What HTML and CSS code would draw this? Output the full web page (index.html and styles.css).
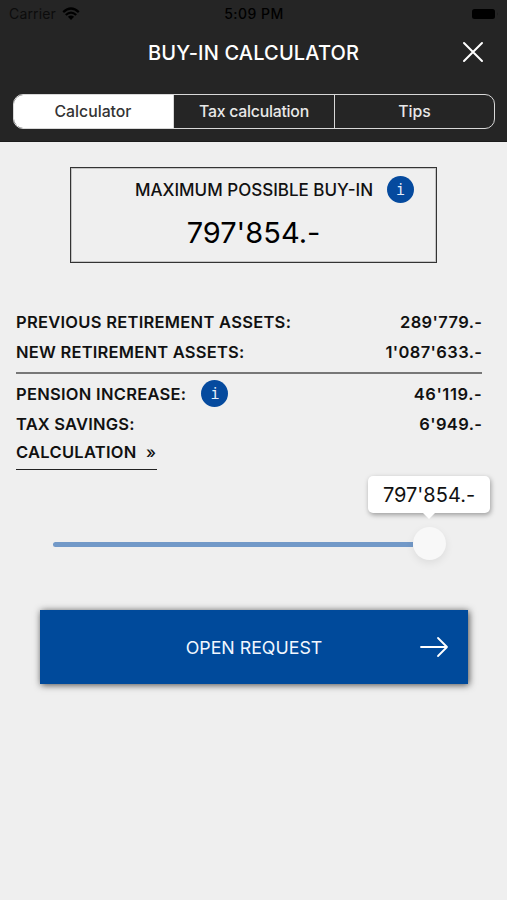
FILE: index.html
```html
<!DOCTYPE html>
<html lang="en">
<head>
<meta charset="utf-8">
<title>Buy-in calculator</title>
<link rel="stylesheet" href="styles.css">
</head>
<body>
<header class="header">
  <div class="status">
    <div class="carrier"><span>Carrier</span>
      <svg class="wifi" viewBox="0 0 18 13"><path d="M1.2 5.1Q9-2 16.8 5.1M3.8 8Q9 3.3 14.2 8" fill="none" stroke="#000" stroke-width="2.3"/><path d="M5.9 9.8Q9 7.4 12.1 9.8L9 13Z"/></svg>
    </div>
    <span class="clock">5:09 PM</span>
    <svg class="battery" viewBox="0 0 27 12"><rect x="0" y="1" width="23" height="10" rx="2.5"/><path d="M25 4.5q1.6 1.5 0 3z" fill="#1a1a1a"/></svg>
  </div>
  <div class="titlebar">
    <h1 class="title">BUY-IN CALCULATOR</h1>
    <svg class="close" viewBox="0 0 22 22"><path d="M2 2 20 20M20 2 2 20" fill="none" stroke="#fff" stroke-width="2" stroke-linecap="round"/></svg>
  </div>
  <nav class="tabs">
    <span class="tab tab-active">Calculator</span>
    <span class="tab tab-tax">Tax calculation</span>
    <span class="tab">Tips</span>
  </nav>
</header>
<main class="content">
  <section class="summary">
    <div class="summary-head"><span class="summary-label">MAXIMUM POSSIBLE BUY-IN</span><span class="info">i</span></div>
    <div class="amount">797'854.-</div>
  </section>
  <section class="figures">
    <div class="row"><span>PREVIOUS RETIREMENT ASSETS:</span><span class="value">289'779.-</span></div>
    <div class="row"><span class="label-new">NEW RETIREMENT ASSETS:</span><span class="value">1'087'633.-</span></div>
    <div class="row row-pension"><span class="pension"><span>PENSION INCREASE:</span><span class="info">i</span></span><span class="value value-pension">46'119.-</span></div>
    <div class="row row-tax"><span class="label-tax">TAX SAVINGS:</span><span class="value">6'949.-</span></div>
    <a class="calc"><span>CALCULATION</span><span class="chevron">»</span></a>
  </section>
  <section class="slider">
    <div class="track"></div>
    <div class="thumb"><div class="bubble">797'854.-</div></div>
  </section>
  <div class="button"><span class="button-label">OPEN REQUEST</span>
    <svg class="arrow" viewBox="0 0 30 22"><path d="M2 11H28M19 2 28 11 19 20" fill="none" stroke="#fff" stroke-width="1.8" stroke-linecap="round" stroke-linejoin="round"/></svg>
  </div>
</main>
</body>
</html>
```
FILE: styles.css
```css
* { box-sizing: border-box; }
body {
  margin: 0;
  width: 507px;
  height: 900px;
  overflow: hidden;
  background: #efefef;
  color: #111;
  font-family: Inter, "Liberation Sans", sans-serif;
  white-space: nowrap;
}
.header {
  height: 142px;
  background: #252525;
  border-bottom: 1px solid #1b1b1b;
}
.status {
  height: 27px;
  display: grid;
  grid-template-columns: 1fr auto 1fr;
  align-items: center;
  padding: 0 8px 0 9px;
  color: #000;
  font-size: 14px;
  line-height: 27px;
}
.carrier { display: flex; align-items: center; gap: 6px; }
.carrier span { color: #0c0c0c; letter-spacing: .15px; }
.wifi { width: 18px; height: 13px; }
.clock { font-weight: 500; font-size: 14px; letter-spacing: .5px; }
.battery { width: 27px; height: 12px; justify-self: end; }
.titlebar {
  height: 49px;
  display: grid;
  grid-template-columns: 1fr auto 1fr;
  align-items: center;
  padding: 1px 23px 0;
}
.title {
  grid-column: 2;
  margin: 0;
  color: #fff;
  font-size: 20px;
  font-weight: 500;
  letter-spacing: .15px;
  padding-top: 1px;
}
.close { width: 22px; height: 22px; justify-self: end; }
.tabs {
  margin: 18px 12px 0 13px;
  height: 35px;
  display: grid;
  grid-template-columns: 159px 161px 1fr;
  border: 1px solid #d8d8d8;
  border-radius: 10px;
  overflow: hidden;
}
.tab {
  color: #e8e8e8;
  font-size: 15.8px;
  font-weight: 500;
  line-height: 33px;
  text-align: center;
}
.tab + .tab { border-left: 1px solid #d8d8d8; }
.tab-active { background: #fff; color: #333; padding-right: 1px; }
.tab-tax { letter-spacing: -.23px; }
.summary {
  width: 367px;
  height: 96px;
  margin: 25px 0 0 70px;
  border: 1px solid #333;
  box-shadow: inset 0 0 0 1px #c4c4c4;
}
.summary-head {
  display: flex;
  align-items: center;
  justify-content: flex-end;
  gap: 14px;
  padding: 8px 22px 0 0;
  font-size: 17px;
  font-weight: 500;
}
.info {
  width: 27px;
  height: 27px;
  border-radius: 50%;
  background: #054a9e;
  color: #e4eefb;
  font: 15px/28px "DejaVu Sans Mono", monospace;
  letter-spacing: 0;
  text-align: center;
}
.amount {
  text-align: center;
  font-size: 29px;
  line-height: 36px;
  margin-top: 12px;
  color: #000;
}
.figures {
  margin: 44px 25px 0 16px;
  font-size: 16.5px;
  font-weight: 600;
  letter-spacing: .28px;
}
.value { letter-spacing: .38px; margin-right: -.38px; }
.value-pension { letter-spacing: .6px; }
.label-new { letter-spacing: .23px; }
.label-tax { letter-spacing: .2px; }
.row {
  height: 30px;
  display: flex;
  align-items: center;
  justify-content: space-between;
}
.row-pension {
  border-top: 2px solid #777;
  margin-top: 5px;
  height: 38px;
  padding-top: 3px;
}
.row-tax { height: 27px; }
.calc {
  width: 141px;
  height: 33px;
  display: flex;
  justify-content: space-between;
  padding-right: 1px;
  line-height: 31px;
  border-bottom: 1px solid #222;
}
.pension { display: flex; align-items: center; gap: 15px; }
.chevron { font-weight: 500; letter-spacing: 0; }
.slider {
  display: flex;
  align-items: center;
  height: 34px;
  margin: 56px 0 0 53px;
}
.track {
  width: 360px;
  height: 5px;
  margin-top: 2px;
  border-radius: 3px 0 0 3px;
  background: #7299c8;
}
.thumb {
  position: relative;
  width: 33px;
  height: 33px;
  border-radius: 50%;
  background: #f8f8f8;
  box-shadow: 0 3px 8px rgba(0, 0, 0, .08);
}
.bubble {
  position: absolute;
  left: -45px;
  top: -51px;
  width: 122px;
  height: 37px;
  border-radius: 5px;
  background: #fff;
  box-shadow: 1px 2px 5px rgba(0, 0, 0, .35);
  font-size: 20px;
  line-height: 38px;
  text-align: center;
}
.bubble::after {
  content: "";
  position: absolute;
  left: 55px;
  top: 37px;
  border: 6px solid transparent;
  border-top-color: #fff;
  border-bottom: 0;
}
.button {
  width: 428px;
  height: 74px;
  margin: 50px 0 0 40px;
  padding: 0 19px;
  display: grid;
  grid-template-columns: 1fr auto 1fr;
  align-items: center;
  background: #004a9b;
  box-shadow: 1px 1px 7px rgba(0, 0, 0, .7);
  color: #f2f7ff;
  font-size: 17.8px;
}
.button-label { grid-column: 2; }
.arrow { width: 30px; height: 22px; justify-self: end; }
```
